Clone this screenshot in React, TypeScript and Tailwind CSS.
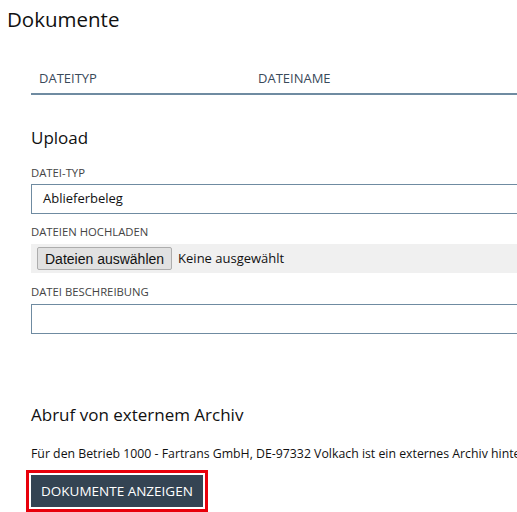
export default function App() {
  return (
    <div className="h-[512px] w-[517px] overflow-hidden bg-white text-[#222] [font-family:'Open_Sans','Noto_Sans',sans-serif]">
      <h1 className="pl-[7px] pt-[3px] text-[20.5px] leading-[32px] text-[#111]">Dokumente</h1>

      <div className="w-[620px] pl-[31px]">
        {/* Tabelle */}
        <div className="mt-[30px] flex h-[30px] items-center border-b-2 border-[#6f8ba1] text-[13px] text-[#3a4a5a]">
          <div className="w-[227px] pl-2">DATEITYP</div>
          <div>DATEINAME</div>
        </div>

        <h3 className="mt-[30px] text-[17px] leading-[26px] text-[#111]">Upload</h3>

        <label className="mt-[15px] block text-[11.3px] leading-[14px] text-[#444]">DATEI-TYP</label>
        <div className="mt-[4px] flex h-[30px] items-center border border-[#6f8ba1] pl-[11px] text-[13px] text-[#111]">
          Ablieferbeleg
        </div>

        <label className="mt-[11px] block text-[11.3px] leading-[14px] text-[#444]">DATEIEN HOCHLADEN</label>
        <div className="mt-[5px] flex h-[29px] items-center gap-[6px] bg-[#f0f0f0] pl-[6px] text-[13px] text-[#111]">
          <button className="h-[23px] rounded-[2px] border border-[#adadad] bg-[#e1e1e1] px-[7px] text-[14px] leading-[20px] [font-family:'Liberation_Sans',Arial,sans-serif]">
            Dateien auswählen
          </button>
          <span>Keine ausgewählt</span>
        </div>

        <label className="mt-[12px] block text-[11.3px] leading-[14px] text-[#444]">DATEI BESCHREIBUNG</label>
        <div className="mt-[5px] h-[30px] border border-[#6f8ba1]" />

        <h3 className="mt-[68px] text-[17px] leading-[26px] text-[#111]">Abruf von externem Archiv</h3>
        <p className="mt-[18px] whitespace-nowrap text-[12.3px] leading-[16px] text-[#111]">
          Für den Betrieb 1000 - Fartrans GmbH, DE-97332 Volkach ist ein externes Archiv hinterlegt.
        </p>

        <div className="-ml-[5px] mt-[8px] inline-block border-[3px] border-[#e8000b] p-[2px]">
          <button className="h-[32px] bg-[#344453] px-[10px] text-[13.5px] text-white">DOKUMENTE ANZEIGEN</button>
        </div>
      </div>
    </div>
  );
}
